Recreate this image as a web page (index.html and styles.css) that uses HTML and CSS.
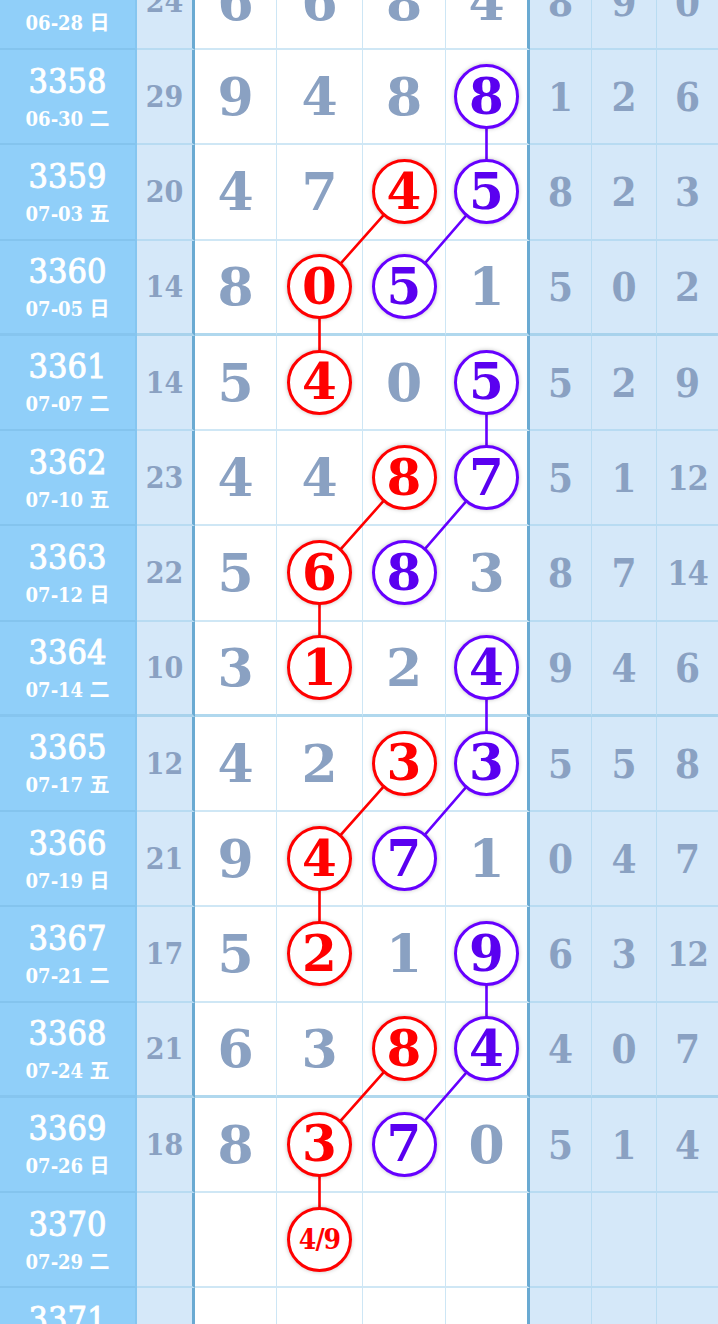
FILE: index.html
```html
<!DOCTYPE html>
<html lang="zh">
<head>
<meta charset="utf-8">
<title>走势图</title>
<link rel="stylesheet" href="styles.css">
</head>
<body>
<div class="chart">
  <div class="row">
    <div class="c-period"><span class="p-num">3357</span><span class="p-date">06-28 日</span></div>
    <div class="c-sum">24</div>
    <div class="c-d">6</div><div class="c-d">6</div><div class="c-d">8</div><div class="c-d c-last">4</div>
    <div class="c-r">8</div><div class="c-r">9</div><div class="c-r">0</div>
  </div>
  <div class="row">
    <div class="c-period"><span class="p-num">3358</span><span class="p-date">06-30 二</span></div>
    <div class="c-sum">29</div>
    <div class="c-d">9</div><div class="c-d">4</div><div class="c-d">8</div><div class="c-d c-last"><span class="ball ball-b">8</span></div>
    <div class="c-r">1</div><div class="c-r">2</div><div class="c-r">6</div>
  </div>
  <div class="row">
    <div class="c-period"><span class="p-num">3359</span><span class="p-date">07-03 五</span></div>
    <div class="c-sum">20</div>
    <div class="c-d">4</div><div class="c-d">7</div><div class="c-d"><span class="ball ball-r">4</span></div><div class="c-d c-last"><span class="ball ball-b">5</span></div>
    <div class="c-r">8</div><div class="c-r">2</div><div class="c-r">3</div>
  </div>
  <div class="row row-end">
    <div class="c-period"><span class="p-num">3360</span><span class="p-date">07-05 日</span></div>
    <div class="c-sum">14</div>
    <div class="c-d">8</div><div class="c-d"><span class="ball ball-r">0</span></div><div class="c-d"><span class="ball ball-b">5</span></div><div class="c-d c-last">1</div>
    <div class="c-r">5</div><div class="c-r">0</div><div class="c-r">2</div>
  </div>
  <div class="row">
    <div class="c-period"><span class="p-num">3361</span><span class="p-date">07-07 二</span></div>
    <div class="c-sum">14</div>
    <div class="c-d">5</div><div class="c-d"><span class="ball ball-r">4</span></div><div class="c-d">0</div><div class="c-d c-last"><span class="ball ball-b">5</span></div>
    <div class="c-r">5</div><div class="c-r">2</div><div class="c-r">9</div>
  </div>
  <div class="row">
    <div class="c-period"><span class="p-num">3362</span><span class="p-date">07-10 五</span></div>
    <div class="c-sum">23</div>
    <div class="c-d">4</div><div class="c-d">4</div><div class="c-d"><span class="ball ball-r">8</span></div><div class="c-d c-last"><span class="ball ball-b">7</span></div>
    <div class="c-r">5</div><div class="c-r">1</div><div class="c-r c-two">12</div>
  </div>
  <div class="row">
    <div class="c-period"><span class="p-num">3363</span><span class="p-date">07-12 日</span></div>
    <div class="c-sum">22</div>
    <div class="c-d">5</div><div class="c-d"><span class="ball ball-r">6</span></div><div class="c-d"><span class="ball ball-b">8</span></div><div class="c-d c-last">3</div>
    <div class="c-r">8</div><div class="c-r">7</div><div class="c-r c-two">14</div>
  </div>
  <div class="row row-end">
    <div class="c-period"><span class="p-num">3364</span><span class="p-date">07-14 二</span></div>
    <div class="c-sum">10</div>
    <div class="c-d">3</div><div class="c-d"><span class="ball ball-r">1</span></div><div class="c-d">2</div><div class="c-d c-last"><span class="ball ball-b">4</span></div>
    <div class="c-r">9</div><div class="c-r">4</div><div class="c-r">6</div>
  </div>
  <div class="row">
    <div class="c-period"><span class="p-num">3365</span><span class="p-date">07-17 五</span></div>
    <div class="c-sum">12</div>
    <div class="c-d">4</div><div class="c-d">2</div><div class="c-d"><span class="ball ball-r">3</span></div><div class="c-d c-last"><span class="ball ball-b">3</span></div>
    <div class="c-r">5</div><div class="c-r">5</div><div class="c-r">8</div>
  </div>
  <div class="row">
    <div class="c-period"><span class="p-num">3366</span><span class="p-date">07-19 日</span></div>
    <div class="c-sum">21</div>
    <div class="c-d">9</div><div class="c-d"><span class="ball ball-r">4</span></div><div class="c-d"><span class="ball ball-b">7</span></div><div class="c-d c-last">1</div>
    <div class="c-r">0</div><div class="c-r">4</div><div class="c-r">7</div>
  </div>
  <div class="row">
    <div class="c-period"><span class="p-num">3367</span><span class="p-date">07-21 二</span></div>
    <div class="c-sum">17</div>
    <div class="c-d">5</div><div class="c-d"><span class="ball ball-r">2</span></div><div class="c-d">1</div><div class="c-d c-last"><span class="ball ball-b">9</span></div>
    <div class="c-r">6</div><div class="c-r">3</div><div class="c-r c-two">12</div>
  </div>
  <div class="row row-end">
    <div class="c-period"><span class="p-num">3368</span><span class="p-date">07-24 五</span></div>
    <div class="c-sum">21</div>
    <div class="c-d">6</div><div class="c-d">3</div><div class="c-d"><span class="ball ball-r">8</span></div><div class="c-d c-last"><span class="ball ball-b">4</span></div>
    <div class="c-r">4</div><div class="c-r">0</div><div class="c-r">7</div>
  </div>
  <div class="row">
    <div class="c-period"><span class="p-num">3369</span><span class="p-date">07-26 日</span></div>
    <div class="c-sum">18</div>
    <div class="c-d">8</div><div class="c-d"><span class="ball ball-r">3</span></div><div class="c-d"><span class="ball ball-b">7</span></div><div class="c-d c-last">0</div>
    <div class="c-r">5</div><div class="c-r">1</div><div class="c-r">4</div>
  </div>
  <div class="row">
    <div class="c-period"><span class="p-num">3370</span><span class="p-date">07-29 二</span></div>
    <div class="c-sum"></div>
    <div class="c-d"></div><div class="c-d"><span class="ball ball-r ball-small">4/9</span></div><div class="c-d"></div><div class="c-d c-last"></div>
    <div class="c-r"></div><div class="c-r"></div><div class="c-r"></div>
  </div>
  <div class="row">
    <div class="c-period"><span class="p-num">3371</span><span class="p-date">07-31 四</span></div>
    <div class="c-sum"></div>
    <div class="c-d"></div><div class="c-d"></div><div class="c-d"></div><div class="c-d c-last"></div>
    <div class="c-r"></div><div class="c-r"></div><div class="c-r"></div>
  </div>

  <svg class="links" width="718" height="1430" viewBox="0 0 718 1430" aria-hidden="true">
    <path d="M404 237.1 L319.5 332.35 L319.5 427.6 M404 522.85 L319.5 618.1 L319.5 713.35 M404 808.6 L319.5 903.85 L319.5 999.1 M404 1094.35 L319.5 1189.6 L319.5 1284.85" fill="none" stroke="#ff0000" stroke-width="2.6"/>
    <path d="M486.5 141.85 L486.5 237.1 L404 332.35 M486.5 427.6 L486.5 522.85 L404 618.1 M486.5 713.35 L486.5 808.6 L404 903.85 M486.5 999.1 L486.5 1094.35 L404 1189.6" fill="none" stroke="#6600ff" stroke-width="2.6"/>
  </svg>
</div>
</body>
</html>
```

FILE: styles.css
```css
html, body {
  margin: 0;
  padding: 0;
  overflow: hidden;
  background: #ffffff;
}

.chart {
  position: relative;
  width: 718px;
  margin-top: -45.25px;
  font-family: "DejaVu Serif", "Noto Sans CJK SC", serif;
}

.row {
  display: grid;
  grid-template-columns: 137px 58px 82px 86px 83px 84px 62px 65px 61px;
  height: 95.25px;
}

.row > div {
  box-sizing: border-box;
  display: flex;
  align-items: center;
  justify-content: center;
  border-bottom: 2px solid #cfe7f5;
  color: #8aa1c2;
  font-weight: bold;
}

.c-period {
  flex-direction: column;
  gap: 8px;
  background: #90cff9;
  border-right: 2px solid #86c6f0;
  border-bottom-color: #84c4ee !important;
}

.p-num {
  font-size: 34px;
  line-height: 36px;
  font-weight: 500;
  color: #ffffff;
  font-family: "DejaVu Serif Condensed", "DejaVu Serif", serif;
  font-stretch: condensed;
  -webkit-text-stroke: 0.9px #ffffff;
}

.p-date {
  font-size: 20px;
  line-height: 24px;
  font-weight: bold;
  color: #ffffff;
  font-family: "DejaVu Serif Condensed", "DejaVu Serif", "Noto Sans CJK SC", sans-serif;
  font-stretch: condensed;
}

.c-sum {
  background: #d5e8f9;
  border-right: 3px solid #6aaad2;
  font-size: 30px;
  font-family: "DejaVu Serif Condensed", "DejaVu Serif", serif;
  font-stretch: condensed;
  border-bottom-color: #b8dbf2 !important;
}

.c-d {
  background: #ffffff;
  border-right: 1px solid #cde6f5;
  font-size: 52px;
}

.c-d.c-last {
  border-right: 3px solid #6aaad2;
}

.c-r {
  background: #d5e8f9;
  border-right: 1px solid #b9dcf2;
  font-size: 40px;
  font-family: "DejaVu Serif Condensed", "DejaVu Serif", serif;
  font-stretch: condensed;
  border-bottom-color: #b8dbf2 !important;
}

.c-r.c-two {
  font-size: 34px;
  letter-spacing: -1px;
}

.c-r:last-child {
  border-right: none;
}

.row-end > div {
  border-bottom: 3px solid #b0d8ee;
}

.row-end > .c-sum,
.row-end > .c-r {
  border-bottom-color: #a8d2ec !important;
}

.row-end > .c-period {
  border-bottom-color: #86c5ef !important;
}

.ball {
  position: relative;
  z-index: 2;
  box-sizing: border-box;
  width: 65px;
  height: 65px;
  border-radius: 50%;
  background: #ffffff;
  display: flex;
  align-items: center;
  justify-content: center;
  font-size: 50px;
  font-weight: bold;
  line-height: 1;
  box-shadow: 0 0 4px rgba(0, 0, 0, 0.25);
}

.ball-r {
  border: 3px solid #ff0000;
  color: #ff0000;
}

.ball-b {
  border: 3px solid #6600ff;
  color: #5a00f0;
}

.ball-small {
  font-size: 28px;
  letter-spacing: -1px;
  font-family: "DejaVu Serif Condensed", "DejaVu Serif", serif;
  font-stretch: condensed;
}

.links {
  position: absolute;
  left: 0;
  top: 0;
  z-index: 1;
  pointer-events: none;
}
```
